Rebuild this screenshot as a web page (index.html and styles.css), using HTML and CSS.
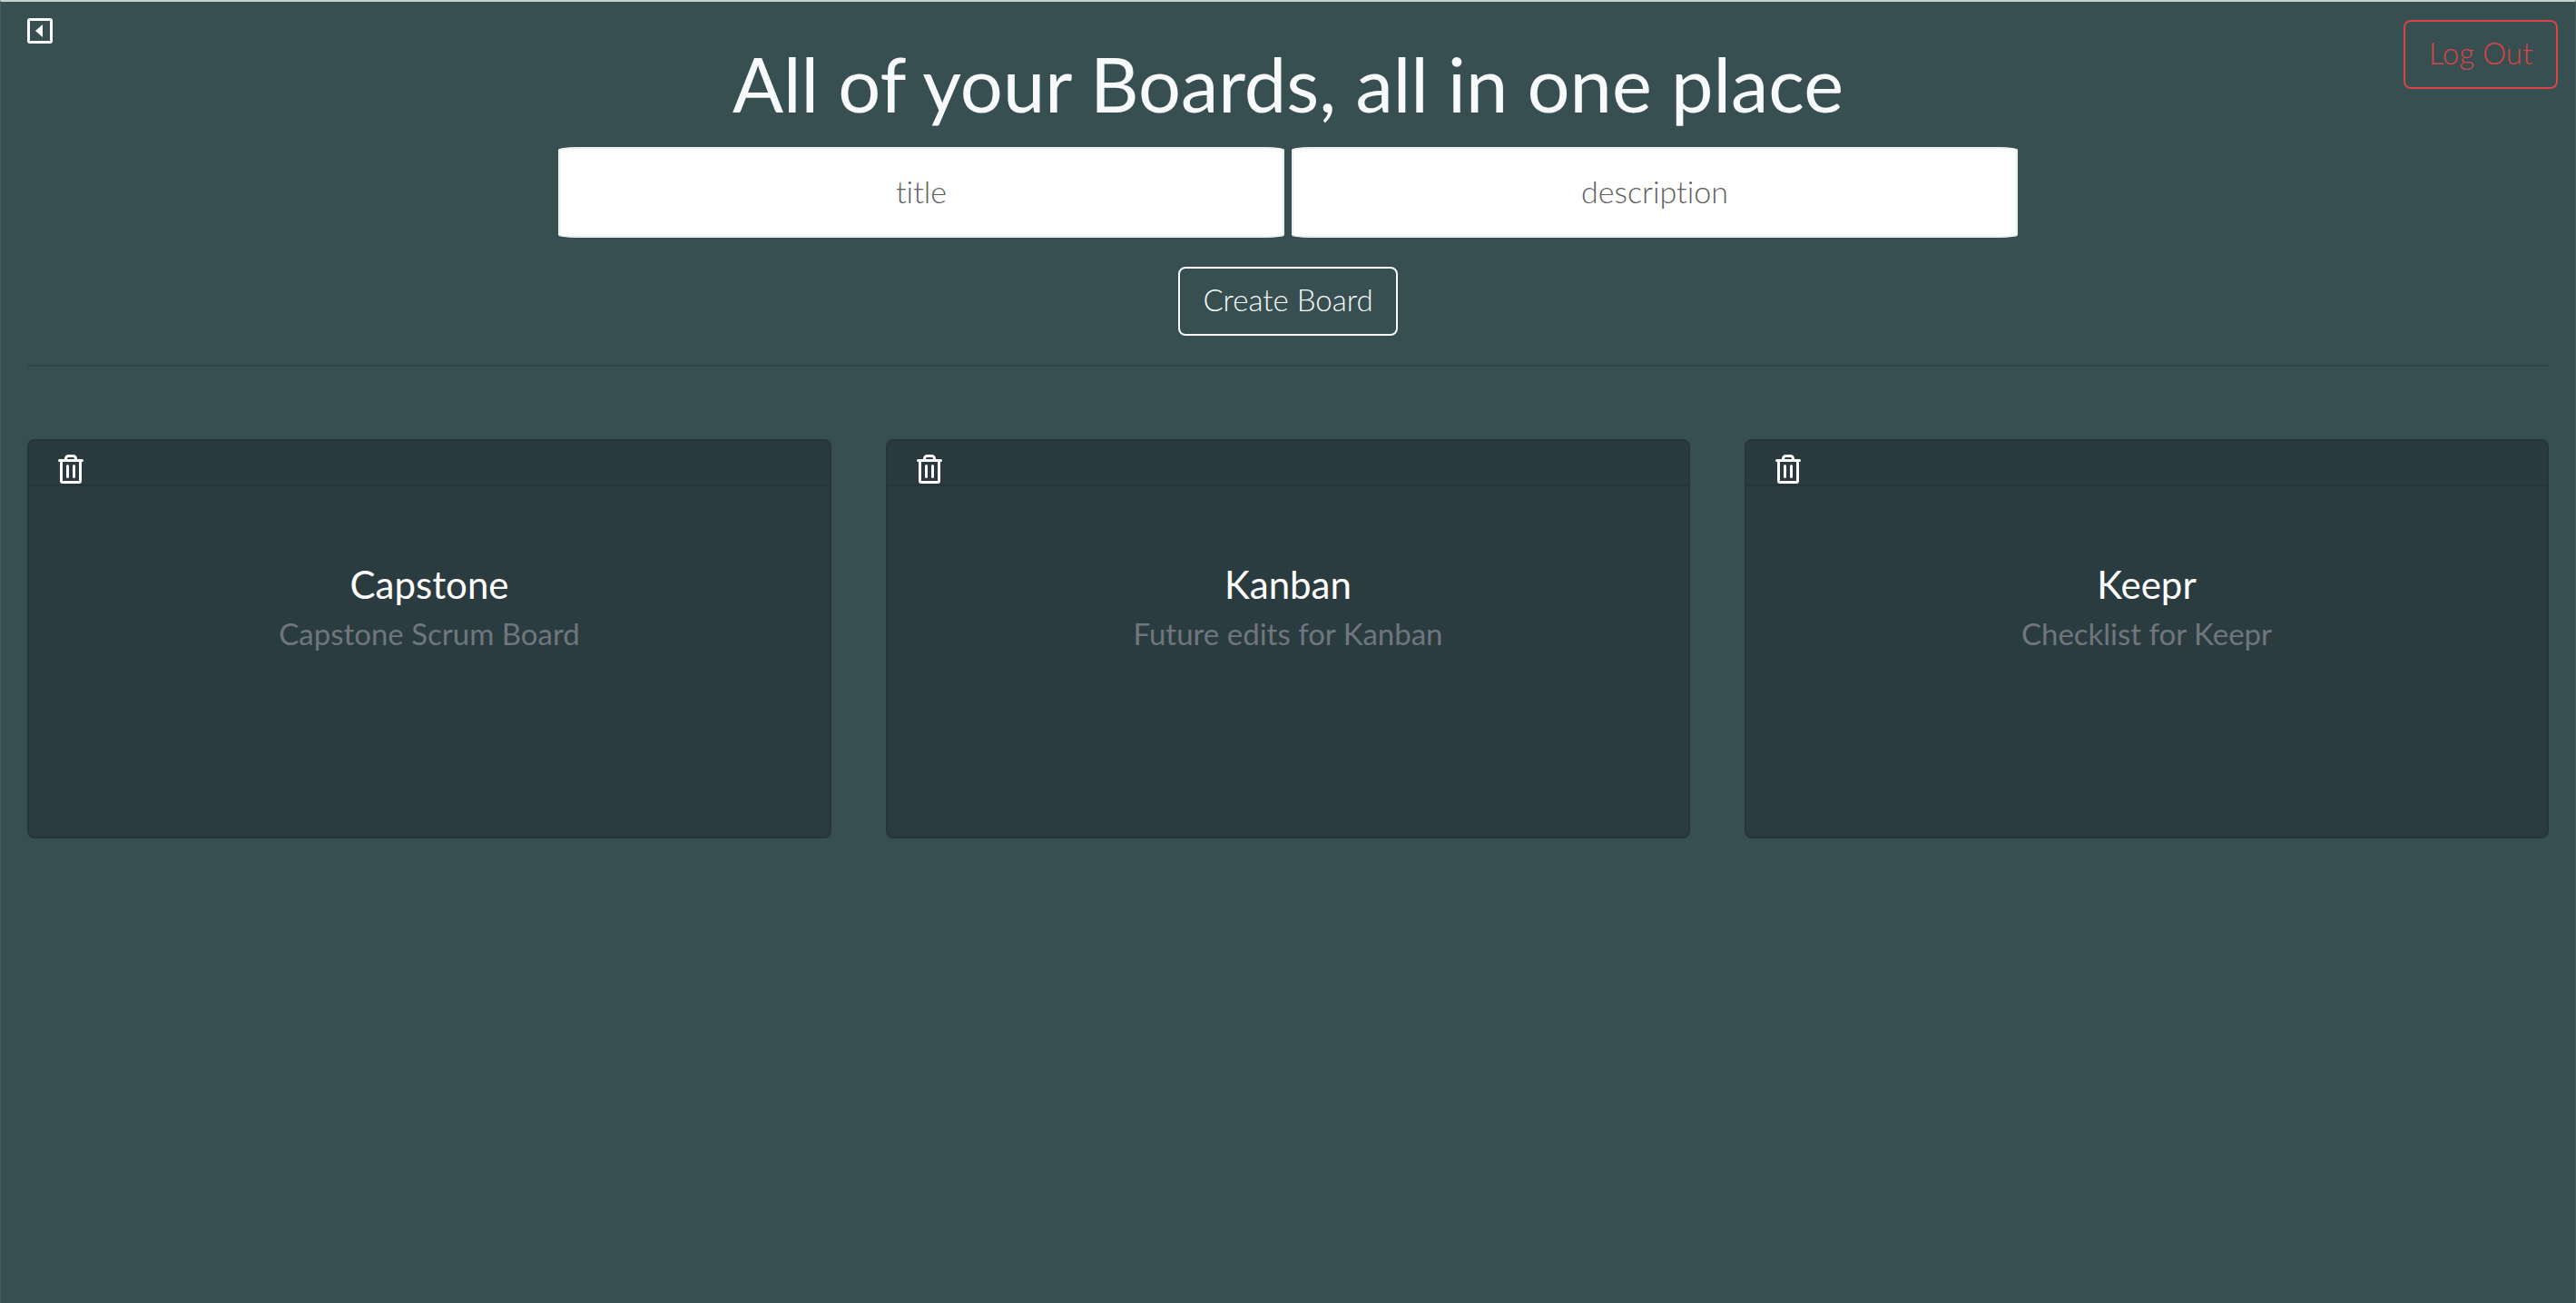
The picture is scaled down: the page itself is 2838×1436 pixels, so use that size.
FILE: index.html
```
<!DOCTYPE html>
<html lang="en">
<head>
  <meta charset="utf-8">
  <meta name="viewport" content="width=device-width, initial-scale=1">
  <title>Boards</title>
  <link rel="stylesheet" href="styles.css">
</head>
<body>
  <svg class="sprite" aria-hidden="true">
    <symbol id="trash" viewBox="0 0 28 32">
      <path d="M1.500 6.500h25M8.500 6V4.500a3 3 0 0 1 3-3h5a3 3 0 0 1 3 3V6" />
      <path d="M3.500 7v22a1.500 1.500 0 0 0 1.500 1.500h18a1.500 1.500 0 0 0 1.500-1.500V7M10.500 12.500v12M17.500 12.500v12" />
    </symbol>
  </svg>
  <header class="topbar">
    <button class="icon-btn back" type="button" aria-label="Back">
      <svg class="back-icon" viewBox="0 0 28 28">
        <rect x="1.500" y="1.500" width="25" height="25" rx="1.500" />
        <path d="M17 7v14L9 14z" />
      </svg>
    </button>
    <h1 class="page-title">All of your Boards, all in one place</h1>
    <button class="btn btn-danger" type="button">Log Out</button>
  </header>
  <main>
    <form class="board-form">
      <div class="fields">
        <input class="field" type="text" placeholder="title" aria-label="title">
        <input class="field" type="text" placeholder="description" aria-label="description">
      </div>
      <button class="btn btn-light" type="button">Create Board</button>
    </form>
    <hr class="divider">
    <section class="boards">
      <article class="card">
        <div class="card-header">
          <button class="icon-btn" type="button" aria-label="Delete Capstone"><svg class="trash-icon"><use href="#trash" /></svg></button>
        </div>
        <div class="card-body">
          <h2 class="card-title">Capstone</h2>
          <p class="card-text">Capstone Scrum Board</p>
        </div>
      </article>
      <article class="card">
        <div class="card-header">
          <button class="icon-btn" type="button" aria-label="Delete Kanban"><svg class="trash-icon"><use href="#trash" /></svg></button>
        </div>
        <div class="card-body">
          <h2 class="card-title">Kanban</h2>
          <p class="card-text">Future edits for Kanban</p>
        </div>
      </article>
      <article class="card">
        <div class="card-header">
          <button class="icon-btn" type="button" aria-label="Delete Keepr"><svg class="trash-icon"><use href="#trash" /></svg></button>
        </div>
        <div class="card-body">
          <h2 class="card-title">Keepr</h2>
          <p class="card-text">Checklist for Keepr</p>
        </div>
      </article>
    </section>
  </main>
</body>
</html>
```
FILE: styles.css
```
* {
  box-sizing: border-box;
}

body {
  margin: 0;
  min-height: 100vh;
  padding: 18px 29px 0;
  border: 1px solid #465d5e;
  border-top: 2px solid #c9d0d0;
  border-bottom: 0;
  background: #374f50;
  color: #f8f9fa;
  font-family: Lato, "Liberation Sans", sans-serif;
  font-variant-ligatures: no-common-ligatures;
}

.sprite {
  display: none;
}

.topbar {
  display: grid;
  grid-template-columns: 1fr auto 1fr;
  align-items: start;
}

.icon-btn {
  display: block;
  padding: 0;
  border: 0;
  background: none;
  color: #fff;
  cursor: pointer;
}

.back {
  justify-self: start;
}

.back-icon {
  display: block;
  width: 28px;
  height: 28px;
}

.back-icon rect {
  fill: none;
  stroke: currentColor;
  stroke-width: 3;
}

.back-icon path {
  fill: currentColor;
}

.page-title {
  margin: 0;
  padding-top: 22px;
  font-size: 83px;
  font-weight: 400;
  line-height: 100px;
  text-align: center;
}

.btn {
  height: 76px;
  padding: 10px 24px 14px;
  border: 2px solid;
  border-radius: 8px;
  background: none;
  font-family: inherit;
  font-size: 33px;
  font-weight: 300;
  line-height: 48px;
  font-variant-ligatures: inherit;
  cursor: pointer;
}

.btn-danger {
  justify-self: end;
  min-width: 170px;
  margin: 2px -10px 0 0;
  color: #d94449;
}

.btn-light {
  min-width: 242px;
  color: #f8f9fa;
}

.board-form {
  display: flex;
  flex-direction: column;
  align-items: center;
  gap: 32px;
  padding-top: 20px;
}

.fields {
  display: grid;
  grid-template-columns: 1fr 1fr;
  gap: 8px;
  width: 100%;
  max-width: 1608px;
}

.field {
  width: 100%;
  height: 100px;
  padding: 0 8px 4px;
  border: 2px solid #eceeef;
  border-radius: 20px / 3px;
  background: #fff;
  color: #374f50;
  font-family: inherit;
  font-size: 34px;
  font-weight: 300;
  font-variant-ligatures: inherit;
  text-align: center;
}

.field::placeholder {
  color: #606060;
  opacity: 1;
}

.divider {
  height: 2px;
  margin: 32px 0 80px;
  border: 0;
  background: #2f4547;
}

.boards {
  display: grid;
  grid-template-columns: repeat(3, 1fr);
  gap: 60px;
}

.card {
  min-height: 440px;
  border: 2px solid #263539;
  border-radius: 8px;
  background: #2b3c40;
}

.card-header {
  height: 50px;
  padding: 15px 32px 0;
  border-bottom: 2px solid #263539;
  border-radius: 6px 6px 0 0;
  background: #2a3a3f;
}

.trash-icon {
  display: block;
  width: 28px;
  height: 32px;
  fill: none;
  stroke: currentColor;
  stroke-width: 3;
  stroke-linecap: round;
}

.card-body {
  padding: 84px 40px;
  text-align: center;
}

.card-title {
  margin: 0 0 6px;
  color: #fff;
  font-size: 42px;
  font-weight: 400;
  line-height: 48px;
}

.card-text {
  margin: 0;
  color: #6f767e;
  font-size: 33px;
  line-height: 48px;
}
```
